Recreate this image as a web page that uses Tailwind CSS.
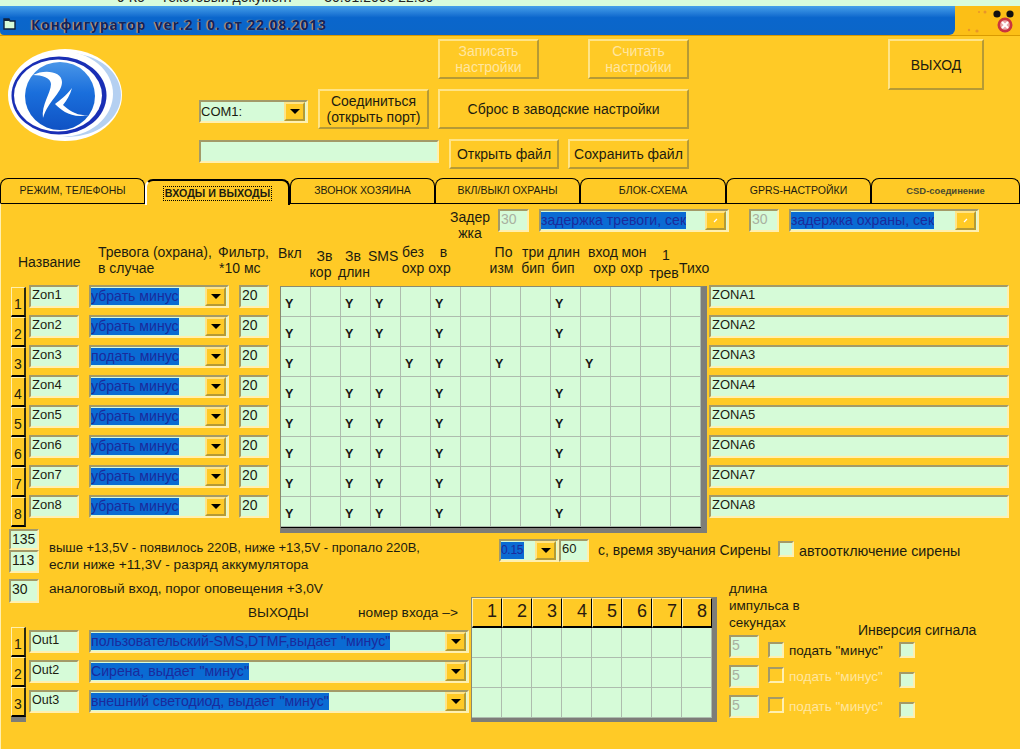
<!DOCTYPE html>
<html lang="ru">
<head>
    <meta charset="UTF-8">
    <title>Конфигуратор</title>
    <script src="https://cdn.jsdelivr.net/npm/@tailwindcss/browser@4"></script>
</head>
<body class="bg-[#ffca26] overflow-hidden">
    <div id="app" class="w-[1020px] h-[749px] overflow-hidden bg-[#ffca26] text-[14px] text-[#1c1c10] font-['Liberation_Sans',sans-serif]"></div>

    <script>
        const sunken = 'border-2 border-t-[#a39a68] border-l-[#a39a68] border-r-[#fff0b0] border-b-[#fff0b0]';
        const raised = 'border-2 border-t-[#ffe487] border-l-[#ffe487] border-r-[#b59a35] border-b-[#b59a35]';

        // поле ввода
        function field(size, text = '', color = 'text-[#1c1c10] text-[14px]') {
            return `<div class="${size} bg-[#d6fbd8] ${sunken} ${color} shrink-0 pl-[1px] leading-[16px] overflow-hidden">${text}</div>`;
        }

        // кнопка со стрелкой комбобокса
        function arrow(size = 'w-[21px]') {
            return `<div class="${size} h-[19px] bg-[#ffca26] ${raised} flex items-center justify-center shrink-0"><div class="w-0 h-0 border-x-[5px] border-x-transparent border-t-[5px] border-t-black"></div></div>`;
        }

        function tickButton() {
            return `<div class="w-[21px] h-[19px] bg-[#ffca26] ${raised} flex items-center justify-center shrink-0"><svg width="5" height="5" viewBox="0 0 5 5"><path d="M1 4L4 1" stroke="#fff" stroke-width="1.2"/></svg></div>`;
        }

        // комбобокс с выделенным текстом
        function combo(size, text, button = arrow()) {
            return `<div class="${size} h-[23px] bg-[#d6fbd8] ${sunken} flex items-center justify-between shrink-0 pr-[1px]">
                <span class="bg-[#0a6bd3] text-[#1b2a9c] h-[17px] leading-[17px] whitespace-nowrap text-[14.1px] overflow-hidden">${text}</span>${button}</div>`;
        }

        function button(size, text, extra = 'text-[#1c1c10]') {
            return `<div class="${size} ${raised} ${extra} bg-[#ffca26] shrink-0 flex items-center justify-center text-center leading-[16px] text-[14px]">${text}</div>`;
        }

        function check(extra = '', bg = 'bg-[#d6fbd8]') {
            return `<div class="w-[16px] h-[16px] shrink-0 ${bg} ${sunken} ${extra}"></div>`;
        }

        function numButton(n, size = 'h-[30px]') {
            return `<div class="w-[15px] ${size} bg-[#ffca26] border-t border-l border-t-[#fff0b0] border-l-[#fff0b0] border-r-2 border-b-2 border-r-[#2a2a10] border-b-black flex items-end justify-center pb-[3px] text-[14px] leading-[16px]">${n}</div>`;
        }

        const tabs = [
            ['w-[145px]', 'РЕЖИМ, ТЕЛЕФОНЫ'],
            ['w-[145px]', 'ВХОДЫ И ВЫХОДЫ'],
            ['w-[145px]', 'ЗВОНОК ХОЗЯИНА'],
            ['w-[145px]', 'ВКЛ/ВЫКЛ ОХРАНЫ'],
            ['w-[146px]', 'БЛОК-СХЕМА'],
            ['w-[145px]', 'GPRS-НАСТРОЙКИ'],
            ['w-[149px]', 'CSD-соединение'],
        ];

        function tab(item, i) {
            if (i === 1) {
                return `<div class="${item[0]} h-[26px] mt-[1px] -mb-[2px] relative z-10 bg-[#ffca26] rounded-t-[8px] border-t-2 border-x-2 border-t-black border-l-white border-r-black flex items-center justify-center font-bold text-[10.7px]">
                    <span class="border border-dotted border-black px-[1px] leading-[13px] whitespace-nowrap">${item[1]}</span></div>`;
            }
            return `<div class="${item[0]} h-[25px] rounded-t-[8px] border-t border-x border-black flex items-center justify-center whitespace-nowrap ${i === 6 ? 'font-bold text-[9.4px] text-[#4a4a30]' : 'text-[10.5px]'}">${item[1]}</div>`;
        }

        const zoneMarks = [0, 2, 3, 5, 9];
        const zones = [1, 2, 3, 4, 5, 6, 7, 8].map(n => ({
            n,
            action: n === 3 ? 'подать минус' : 'убрать минус',
            marks: n === 3 ? [0, 4, 5, 7, 10] : zoneMarks,
        }));

        function zoneRow(z) {
            return `<div class="h-[30px] flex">
                ${field('w-[50px] h-[23px]', 'Zon' + z.n, 'text-[#1c1c10] text-[13px]')}
                ${combo('w-[140px] ml-[10px]', z.action)}
                ${field('w-[30px] h-[23px] ml-[10px]', '20')}
            </div>`;
        }

        function markCell(row, col) {
            const on = row.marks.includes(col);
            return `<div class="h-[30px] border-r border-b border-[#aebcae] pl-[4px] pt-[10px] leading-[14px] text-[12.5px] font-bold text-[#151515]">${on ? 'Y' : ''}</div>`;
        }

        const marksGrid = zones.map(z => Array.from({ length: 14 }, (_, c) => markCell(z, c)).join('')).join('');

        const outputs = [
            ['Out1', 'пользовательский-SMS,DTMF,выдает "минус"'],
            ['Out2', 'Сирена, выдает "минус"'],
            ['Out3', 'внешний светодиод, выдает "минус"'],
        ];

        document.getElementById('app').innerHTML = `
        <!-- остаток окна сверху -->
        <div class="h-[6px] bg-[#d8fcdc] overflow-hidden pl-[117px]">
            <div class="-mt-[10px] text-[14px] leading-[15px] whitespace-pre text-[#222]">9 Кб    Текстовый документ        30.01.2006 22:30</div>
        </div>

        <!-- заголовок -->
        <div class="h-[30px] flex bg-[#fcbf16] border-b border-[#d99a00]">
            <div class="w-[955px] h-[29px] ml-0 rounded-br-[6px] rounded-bl-[4px] bg-gradient-to-b from-[#45a0ea] from-0% via-[#0a66cc] via-40% to-[#0b66c8] flex items-center pl-[3px] pt-[7px]">
                <svg width="13" height="12" viewBox="0 0 13 12" class="shrink-0">
                    <path d="M1 1h5l1 2h5v8H1z" fill="#d6fbd8" stroke="#10223c" stroke-width="1.4"/>
                    <path d="M1 1h5v2H1z" fill="#10223c"/>
                </svg>
                <span class="ml-[15px] font-['Open_Sans',sans-serif] font-bold text-[14px] tracking-[0.75px] whitespace-pre text-[#10255c] [text-shadow:-1px_0_1px_#d8b060]">Конфигуратор  ver.2 i 0. от 22.08.2013</span>
            </div>
            <svg width="65" height="29" viewBox="0 0 65 29" class="shrink-0">
                <g fill="#e8952a"><circle cx="30" cy="6" r="1.5"/><circle cx="14" cy="24" r="1.2"/><circle cx="22" cy="25" r="1.6"/><circle cx="24" cy="6" r="1"/></g>
                <circle cx="42" cy="8" r="3.6" fill="#111"/><circle cx="55" cy="8" r="3.6" fill="#111"/>
                <circle cx="50" cy="19" r="7.5" fill="#c9353e"/><circle cx="50" cy="19" r="4.8" fill="#e9a6a8"/>
                <path d="M47 16l6 6M53 16l-6 6" stroke="#fff" stroke-width="2"/>
            </svg>
        </div>

        <!-- верхняя часть -->
        <div class="h-[142px] flex">
            <svg width="114" height="92" viewBox="0 0 114 92" class="ml-[8px] mt-[13px] shrink-0">
                <defs>
                    <linearGradient id="ball" x1="0" y1="0" x2="0" y2="1">
                        <stop offset="0" stop-color="#4a96e8"/>
                        <stop offset="0.45" stop-color="#1a6fdc"/>
                        <stop offset="1" stop-color="#0f52c4"/>
                    </linearGradient>
                </defs>
                <ellipse cx="57" cy="46" rx="57" ry="46" fill="#fff"/>
                <ellipse cx="60" cy="46" rx="53" ry="42" fill="#b5d0f1"/>
                <ellipse cx="53" cy="45" rx="52" ry="43" fill="#fff"/>
                <ellipse cx="51" cy="46.5" rx="47.5" ry="39" fill="#1a2fb5"/>
                <ellipse cx="50" cy="46.5" rx="44" ry="36" fill="#fff"/>
                <ellipse cx="52" cy="47" rx="35" ry="34" fill="url(#ball)"/>
                <path d="M25 26C36 20 54 22 54 33C54 44 40 52 35 69C33 56 43 44 43 35C43 29 34 26 25 26Z" fill="#fff"/>
                <path d="M64 39C58 47 52 51 47 55C54 62 66 72 87 64C72 70 62 62 55 56C59 51 62 46 64 39Z" fill="#fff"/>
            </svg>

            <div class="w-[239px] ml-[77px] mt-[53px] shrink-0">
                <div class="flex">
                    ${`<div class="w-[109px] h-[23px] mt-[11px] bg-[#d6fbd8] ${sunken} flex items-center justify-between pr-[1px] shrink-0"><span class="leading-[17px] text-[13px]">COM1:</span>${arrow()}</div>`}
                    ${button('w-[111px] h-[40px] ml-[10px]', 'Соединиться<br>(открыть порт)')}
                </div>
                ${field('w-[240px] h-[23px] mt-[11px]')}
            </div>

            <div class="w-[251px] mt-[3px] shrink-0">
                <div class="flex justify-between">
                    ${button('w-[101px] h-[40px]', 'Записать<br>настройки', 'text-[#ffe6a0]')}
                    ${button('w-[101px] h-[40px]', 'Считать<br>настройки', 'text-[#ffe6a0]')}
                </div>
                ${button('w-[251px] h-[40px] mt-[10px]', 'Сброс в заводские настройки')}
                <div class="flex mt-[10px] pl-[11px]">
                    ${button('w-[110px] h-[30px]', 'Открыть файл')}
                    ${button('w-[121px] h-[30px] ml-[9px]', 'Сохранить файл')}
                </div>
            </div>

            ${button('w-[96px] h-[51px] ml-[199px] mt-[3px]', 'ВЫХОД')}
        </div>

        <!-- вкладки -->
        <div class="h-[25px] flex">${tabs.map(tab).join('')}</div>

        <!-- панель -->
        <div class="h-[546px] border-t border-l border-t-black border-l-[#fff0b0]">
            <div class="h-[37px] pt-[5px] flex pl-[447px]">
                <div class="w-[44px] text-center leading-[16px] text-[14px]">Задер<br>жка</div>
                ${field('w-[31px] h-[23px] ml-[6px]', '30', 'text-[#a9b0a0] text-[14px]')}
                ${combo('w-[190px] ml-[10px]', 'задержка тревоги, сек', tickButton())}
                ${field('w-[30px] h-[23px] ml-[20px]', '30', 'text-[#a9b0a0] text-[14px]')}
                ${combo('w-[190px] ml-[10px]', 'задержка охраны, сек', tickButton())}
            </div>

            <!-- подписи столбцов -->
            <div class="h-[44px] flex leading-[16px] text-[14px] whitespace-nowrap">
                <div class="w-[97px] pl-[17px] pt-[13px]">Название</div>
                <div class="w-[120px] mt-[3px]">Тревога (охрана),<br>в случае</div>
                <div class="w-[60px] mt-[3px]">Фильтр,<br><span class="pl-[1px]">*10 мс</span></div>
                <div class="w-[30px] mt-[4px]">Вкл</div>
                <div class="w-[30px] mt-[7px] text-center"><span class="pl-[3px]">Зв</span><br><span class="pr-[5px]">кор</span></div>
                <div class="w-[30px] mt-[7px] text-center">Зв<br>длин</div>
                <div class="w-[30px] mt-[7px] text-center">SMS</div>
                <div class="w-[30px] mt-[3px] text-center">без<br>охр</div>
                <div class="w-[30px] mt-[3px] text-center"><span class="pl-[1px]">в</span><br><span class="pr-[7px]">охр</span></div>
                <div class="w-[30px]"></div>
                <div class="w-[30px] mt-[3px] text-center"><span class="pl-[1px]">По</span><br><span class="pr-[3px]">изм</span></div>
                <div class="w-[30px] mt-[3px] text-center">три<br>бип</div>
                <div class="w-[30px] mt-[3px] text-center">длин<br>бип</div>
                <div class="w-[30px] ml-[10px] mt-[3px] text-center"><span class="pr-[2px]">вход</span><br><span class="pl-[3px]">охр</span></div>
                <div class="w-[30px] mt-[3px] text-center"><span class="pl-[2px]">мон</span><br><span class="pr-[3px]">охр</span></div>
                <div class="w-[30px] mt-[5px] ml-[1px] text-center leading-[18px]"><span class="pl-[4px]">1</span><br>трев</div>
                <div class="w-[30px] mt-[19px] text-center">Тихо</div>
            </div>

            <!-- зоны -->
            <div class="h-[244px] flex">
                <div class="w-[10px] shrink-0"></div>
                <div class="w-[15px] mt-[2px] shrink-0">${zones.map(z => numButton(z.n)).join('')}</div>
                <div class="ml-[3px] w-[240px] shrink-0">${zones.map(zoneRow).join('')}</div>
                <div class="ml-[11px] mt-[1px] w-[427px] h-[247px] shrink-0 border-t border-l border-t-[#8a8a70] border-l-[#8a8a70] border-r-[6px] border-r-[#7d7d78] border-b-[6px] border-b-[#7d7d78]">
                    <div class="grid grid-cols-[repeat(14,30px)] bg-[#d6fbd8] border-b border-black">${marksGrid}</div>
                </div>
                <div class="ml-[2px] w-[300px] shrink-0">${zones.map(z => `<div class="h-[30px]">${field('w-[300px] h-[23px]', 'ZONA' + z.n, 'text-[#1c1c10] text-[13px]')}</div>`).join('')}</div>
            </div>

            <!-- напряжение и сирена -->
            <div class="h-[50px] flex">
                <div class="ml-[8px] w-[30px] shrink-0">
                    ${field('w-[30px] h-[21px]', '135')}
                    ${field('w-[30px] h-[23px]', '113')}
                </div>
                <div class="ml-[10px] w-[450px] pt-[10px] leading-[16px] whitespace-nowrap shrink-0"><span class="text-[13px]">выше +13,5V - появилось 220В, ниже +13,5V - пропало 220В,</span><br><span class="text-[13.7px]">если ниже +11,3V - разряд аккумулятора</span></div>
                <div class="w-[60px] h-[23px] mt-[10px] bg-[#d6fbd8] ${sunken} flex items-center justify-between pr-[1px] shrink-0">
                    <span class="bg-[#0a6bd3] text-[#1b2a9c] h-[17px] leading-[17px] text-[12px] pr-[1px] tracking-tight">0.15</span>${arrow()}
                </div>
                ${field('w-[30px] h-[23px] mt-[10px]', '60', 'text-[#1c1c10] text-[13px]')}
                <div class="ml-[9px] mt-[11px] w-[180px] text-[14px] whitespace-nowrap shrink-0">с, время звучания Сирены</div>
                ${check('mt-[12px]')}
                <div class="ml-[5px] mt-[12px] text-[14.3px] whitespace-nowrap">автоотключение сирены</div>
            </div>

            <!-- выходы -->
            <div class="flex">
                <div class="w-[470px] shrink-0">
                    <div class="h-[24px] flex">
                        ${field('w-[30px] h-[24px] ml-[8px]', '30')}
                        <div class="ml-[10px] text-[13.7px] whitespace-nowrap">аналоговый вход, порог оповещения +3,0V</div>
                    </div>
                    <div class="h-[24px] flex text-[13.5px] whitespace-nowrap">
                        <div class="ml-[247px] w-[110px]">ВЫХОДЫ</div>
                        <div class="text-[13.7px]">номер входа –&gt;</div>
                    </div>
                    <div class="flex">
                        <div class="w-[15px] ml-[10px] shrink-0 border-b-[5px] border-b-[#7d7d78]">${outputs.map((o, i) => numButton(i + 1)).join('')}</div>
                        <div class="ml-[3px] pt-[3px]">
                            ${outputs.map(o => `<div class="h-[30px] flex">${field('w-[50px] h-[23px]', o[0], 'text-[#1c1c10] text-[12.5px]')}${combo('w-[380px] ml-[10px]', o[1])}</div>`).join('')}
                        </div>
                    </div>
                </div>

                <div class="mt-[18px] w-[246px] h-[125px] shrink-0 border-t border-l border-t-[#8a8a70] border-l-[#8a8a70] border-r-[5px] border-r-[#7d7d78] border-b-[5px] border-b-[#7d7d78]">
                    <div class="grid grid-cols-[repeat(8,30px)] bg-[#d6fbd8]">
                        ${[1, 2, 3, 4, 5, 6, 7, 8].map(n => `<div class="h-[30px] bg-[#ffca26] border-t border-l border-t-[#fff0b0] border-l-[#fff0b0] border-r border-b-2 border-r-black border-b-black flex items-center justify-end pr-[4px] pb-[2px] text-[18px] text-[#2a1a10]">${n}</div>`).join('')}
                        ${Array.from({ length: 24 }, () => '<div class="h-[30px] border-r border-b border-[#aebcae]"></div>').join('')}
                    </div>
                </div>

                <div class="ml-[12px] text-[13.5px]">
                    <div class="h-[56px] flex">
                        <div class="w-[129px] leading-[17px] pt-[1px]">длина<br>импульса в<br>секундах</div>
                        <div class="pt-[41px] text-[14px] whitespace-nowrap">Инверсия сигнала</div>
                    </div>
                    <div class="h-[30px] flex">
                        ${field('w-[30px] h-[23px]', '5', 'text-[#a9b0a0] text-[14px]')}
                        ${check('ml-[9px] mt-[7px]')}
                        <div class="ml-[5px] mt-[6px] w-[110px] whitespace-nowrap">подать "минус"</div>
                        ${check('mt-[7px]')}
                    </div>
                    <div class="h-[30px] flex">
                        ${field('w-[30px] h-[23px]', '5', 'text-[#a9b0a0] text-[14px]')}
                        ${check('ml-[9px] mt-[2px]', 'bg-[#ffca26]')}
                        <div class="ml-[5px] mt-[2px] w-[110px] whitespace-nowrap text-[#ffe6a0]">подать "минус"</div>
                        ${check('mt-[7px]')}
                    </div>
                    <div class="h-[30px] flex">
                        ${field('w-[30px] h-[23px]', '5', 'text-[#a9b0a0] text-[14px]')}
                        ${check('ml-[9px] mt-[2px]', 'bg-[#ffca26]')}
                        <div class="ml-[5px] mt-[2px] w-[110px] whitespace-nowrap text-[#ffe6a0]">подать "минус"</div>
                        ${check('mt-[7px]')}
                    </div>
                </div>
            </div>
        </div>`;
    </script>
</body>
</html>
